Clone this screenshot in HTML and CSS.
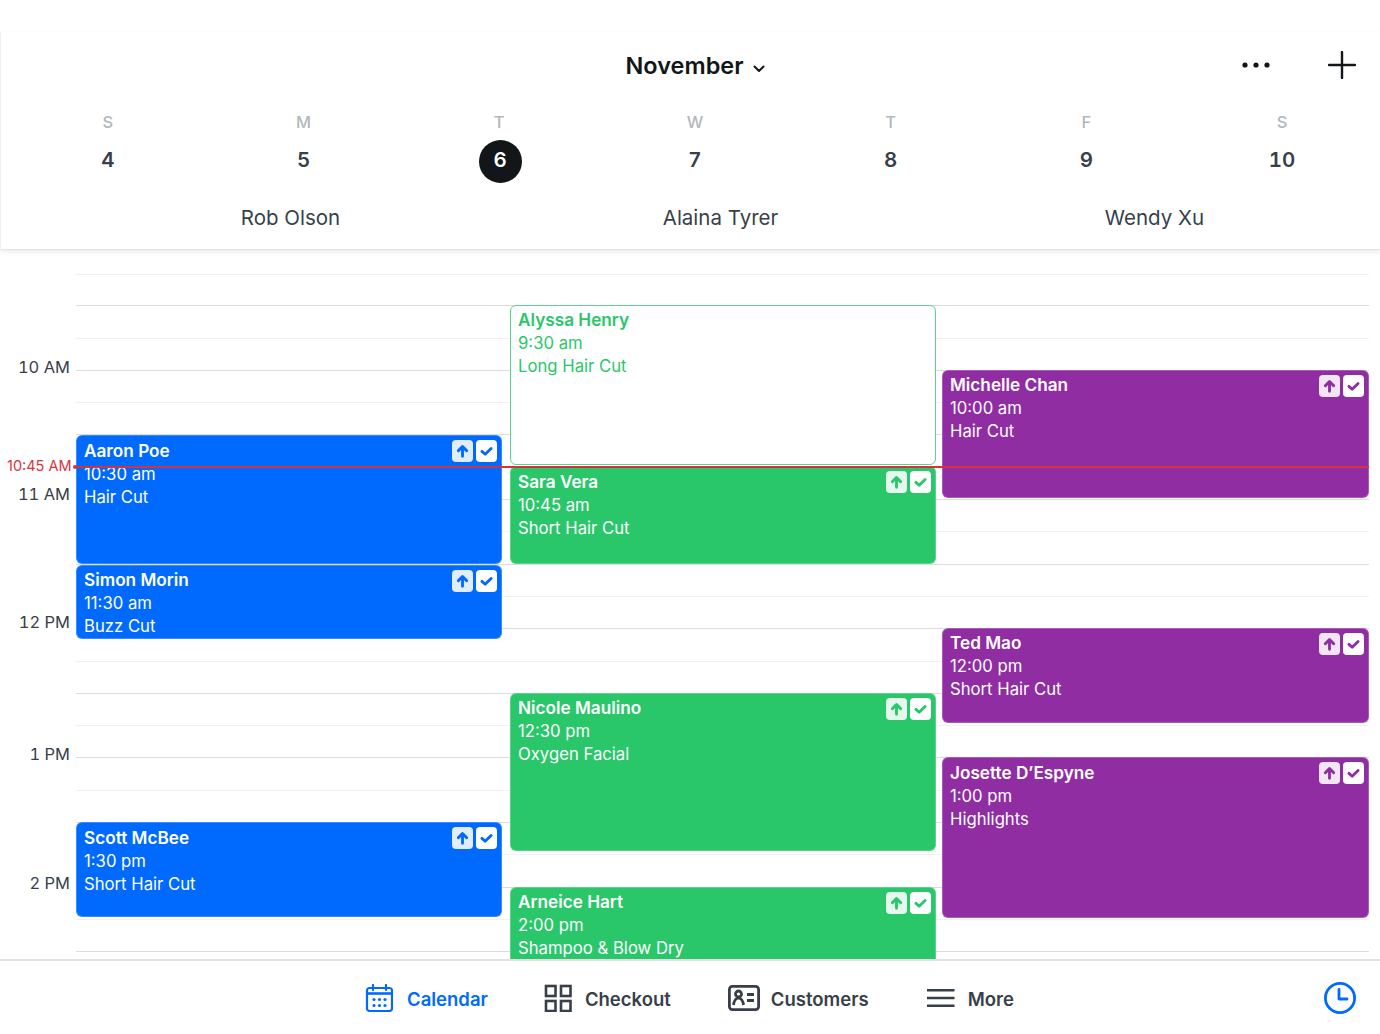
FILE: index.html
```html
<!DOCTYPE html>
<html lang="en">
<head>
<meta charset="utf-8">
<title>Calendar</title>
<link rel="stylesheet" href="styles.css">
</head>
<body>
<svg class="defs" width="0" height="0" aria-hidden="true">
  <symbol id="up" viewBox="0 0 22 22"><path d="M11 16.5V6.5M6.6 10.8 11 6.2l4.4 4.600" fill="none" stroke="currentColor" stroke-width="3" stroke-linecap="round" stroke-linejoin="round"/></symbol>
  <symbol id="ok" viewBox="0 0 22 22"><path d="M6.2 11.4 9.600 14.400 15.800 8.400" fill="none" stroke="currentColor" stroke-width="3" stroke-linecap="round" stroke-linejoin="round"/></symbol>
</svg>
<div class="app">
  <header class="top">
    <div class="title-row">
      <h1 class="month">November</h1>
      <svg class="chev" width="12" height="8" viewBox="0 0 12 8"><path d="M1.5 1.5 6 6l4.5-4.5" fill="none" stroke="#121618" stroke-width="2" stroke-linecap="round" stroke-linejoin="round"/></svg>
      <div class="top-actions">
        <svg class="dots" width="28" height="6" viewBox="0 0 28 6"><circle cx="3" cy="3" r="2.6"/><circle cx="14" cy="3" r="2.6"/><circle cx="25" cy="3" r="2.6"/></svg>
        <svg class="plus" width="28" height="28" viewBox="0 0 28 28"><path d="M14 1v26M1 14h26" fill="none" stroke="#121618" stroke-width="2.4" stroke-linecap="round"/></svg>
      </div>
    </div>
    <div class="week">
      <div class="day"><span class="dow">S</span><span class="num">4</span></div>
      <div class="day"><span class="dow">M</span><span class="num">5</span></div>
      <div class="day"><span class="dow">T</span><span class="num today">6</span></div>
      <div class="day"><span class="dow">W</span><span class="num">7</span></div>
      <div class="day"><span class="dow">T</span><span class="num">8</span></div>
      <div class="day"><span class="dow">F</span><span class="num">9</span></div>
      <div class="day"><span class="dow">S</span><span class="num">10</span></div>
    </div>
    <div class="staff">
      <div>Rob Olson</div>
      <div>Alaina Tyrer</div>
      <div>Wendy Xu</div>
    </div>
  </header>

  <main class="cal">
    <div class="lines">
      <div class="ln first"></div><div class="ln hv"></div><div class="ln"></div><div class="ln hv"></div>
      <div class="ln"></div><div class="ln hv"></div><div class="ln"></div><div class="ln hv"></div>
      <div class="ln"></div><div class="ln hv"></div><div class="ln"></div><div class="ln hv"></div>
      <div class="ln"></div><div class="ln hv"></div><div class="ln"></div><div class="ln hv"></div>
      <div class="ln"></div><div class="ln hv"></div><div class="ln"></div><div class="ln hv"></div>
      <div class="ln"></div><div class="ln hv"></div>
    </div>

    <div class="hour" style="top:105px">10 AM</div>
    <div class="hour" style="top:232px">11 AM</div>
    <div class="hour" style="top:360px">12 PM</div>
    <div class="hour" style="top:492px">1 PM</div>
    <div class="hour" style="top:621px">2 PM</div>

    <div class="cols">
      <section class="col c1">
        <article class="appt blue nudge" style="top:185px;height:129px">
          <h2>Aaron Poe</h2><p>10:30 am</p><p>Hair Cut</p>
          <div class="btns"><span class="b up"><svg><use href="#up"/></svg></span><span class="b"><svg><use href="#ok"/></svg></span></div>
        </article>
        <article class="appt blue" style="top:315px;height:74px">
          <h2>Simon Morin</h2><p>11:30 am</p><p>Buzz Cut</p>
          <div class="btns"><span class="b up"><svg><use href="#up"/></svg></span><span class="b"><svg><use href="#ok"/></svg></span></div>
        </article>
        <article class="appt blue nudge" style="top:572px;height:95px">
          <h2>Scott McBee</h2><p>1:30 pm</p><p>Short Hair Cut</p>
          <div class="btns"><span class="b up"><svg><use href="#up"/></svg></span><span class="b"><svg><use href="#ok"/></svg></span></div>
        </article>
      </section>
      <section class="col c2">
        <article class="appt outline" style="top:55px;height:160px">
          <h2>Alyssa Henry</h2><p>9:30 am</p><p>Long Hair Cut</p>
        </article>
        <article class="appt green nudge" style="top:216px;height:98px">
          <h2>Sara Vera</h2><p>10:45 am</p><p>Short Hair Cut</p>
          <div class="btns"><span class="b up"><svg><use href="#up"/></svg></span><span class="b"><svg><use href="#ok"/></svg></span></div>
        </article>
        <article class="appt green" style="top:443px;height:158px">
          <h2>Nicole Maulino</h2><p>12:30 pm</p><p>Oxygen Facial</p>
          <div class="btns"><span class="b up"><svg><use href="#up"/></svg></span><span class="b"><svg><use href="#ok"/></svg></span></div>
        </article>
        <article class="appt green" style="top:637px;height:95px">
          <h2>Arneice Hart</h2><p>2:00 pm</p><p>Shampoo &amp; Blow Dry</p>
          <div class="btns"><span class="b up"><svg><use href="#up"/></svg></span><span class="b"><svg><use href="#ok"/></svg></span></div>
        </article>
      </section>
      <section class="col c3">
        <article class="appt purple" style="top:120px;height:128px">
          <h2>Michelle Chan</h2><p>10:00 am</p><p>Hair Cut</p>
          <div class="btns"><span class="b up"><svg><use href="#up"/></svg></span><span class="b"><svg><use href="#ok"/></svg></span></div>
        </article>
        <article class="appt purple" style="top:378px;height:95px">
          <h2>Ted Mao</h2><p>12:00 pm</p><p>Short Hair Cut</p>
          <div class="btns"><span class="b up"><svg><use href="#up"/></svg></span><span class="b"><svg><use href="#ok"/></svg></span></div>
        </article>
        <article class="appt purple nudge" style="top:507px;height:161px">
          <h2>Josette D’Espyne</h2><p>1:00 pm</p><p>Highlights</p>
          <div class="btns"><span class="b up"><svg><use href="#up"/></svg></span><span class="b"><svg><use href="#ok"/></svg></span></div>
        </article>
      </section>
    </div>

    <div class="now"><span class="now-label">10:45 AM</span><span class="now-line"></span></div>
  </main>

  <nav class="tabs">
    <a class="tab active cal-tab">
      <svg width="28" height="28" viewBox="0 0 28 28" fill="none" stroke="#006aff" stroke-width="2.200"><rect x="2" y="4" width="25" height="23" rx="2.500"/><path d="M2 9.500h25" stroke-width="2.600"/><path d="M8 1v5M21 1v5" stroke-linecap="round"/><g fill="#006aff" stroke="none"><circle cx="9" cy="15.500" r="1.600"/><circle cx="14.500" cy="15.500" r="1.600"/><circle cx="20" cy="15.500" r="1.600"/><circle cx="9" cy="21.500" r="1.600"/><circle cx="14.500" cy="21.500" r="1.600"/><circle cx="20" cy="21.500" r="1.600"/></g></svg>
      <span>Calendar</span>
    </a>
    <a class="tab check-tab">
      <svg width="28" height="28" viewBox="0 0 28 28" fill="none" stroke="#373f4a" stroke-width="2.6"><rect x="2" y="2" width="9.5" height="10"/><rect x="17" y="2" width="9.5" height="10"/><rect x="2" y="17" width="9.5" height="10"/><rect x="17" y="17" width="9.5" height="10"/></svg>
      <span>Checkout</span>
    </a>
    <a class="tab cust-tab">
      <svg width="32" height="26" viewBox="0 0 32 26" fill="none" stroke="#373f4a" stroke-width="2.800"><rect x="1.400" y="1.400" width="29.200" height="23.200" rx="3"/><circle cx="10.500" cy="9" r="3"/><path d="M5.500 20c.4-4 2.400-7 5-7s4.600 3 5 7"/><path d="M19 9.500h7M19 15.500h7"/></svg>
      <span>Customers</span>
    </a>
    <a class="tab more-tab">
      <svg width="28" height="20" viewBox="0 0 28 20" fill="none" stroke="#373f4a" stroke-width="2.6"><path d="M0 2.200h27.500M0 10h27.500M0 17.800h27.500"/></svg>
      <span>More</span>
    </a>
    <svg class="clock" width="34" height="34" viewBox="0 0 34 34" fill="none" stroke="#006aff" stroke-width="2.8"><circle cx="17" cy="17" r="14.600"/><path d="M16 8.500v9.500h8" stroke-linecap="round" stroke-linejoin="round"/></svg>
  </nav>
</div>
</body>
</html>
```

FILE: styles.css
```css
* { box-sizing: border-box; }
html, body { margin: 0; padding: 0; background: #fff; }
body { font-family: Inter, "Liberation Sans", sans-serif; color: #373f4a; overflow: hidden; }
.defs { position: absolute; }
.app { width: 1380px; height: 1034px; display: flex; flex-direction: column; overflow: hidden; }

.top { position: relative; z-index: 3; height: 218px; margin-top: 32px; flex: none; background: #fff; border-left: 1px solid #efefef; border-bottom: 1px solid #e4e4e4; box-shadow: 0 2px 5px rgba(0,0,0,.08); }
.title-row { position: relative; height: 50px; display: flex; align-items: center; padding-left: 624.500px; margin-top: 9px; }
.month { margin: 0; font-size: 23.500px; line-height: 28px; font-weight: 600; color: #121618; }
.chev { margin: 5px 0 0 9px; }
.top-actions { position: absolute; right: 24px; top: 10px; display: flex; align-items: center; gap: 58px; }
.dots { fill: #121618; display: block; }
.plus { display: block; }

.week { display: grid; grid-template-columns: repeat(7, 195.71px); margin-left: 9px; margin-top: 20px; height: 76px; }
.day { display: flex; flex-direction: column; align-items: center; }
.dow { font-size: 16.500px; line-height: 20px; font-weight: 500; color: #b2b7bb; margin-top: 1px; }
.num { margin-top: 7px; width: 43px; height: 43px; border-radius: 50%; display: flex; justify-content: center; padding-top: 8px; font-size: 20.500px; line-height: 26px; font-weight: 600; font-feature-settings: "tnum"; color: #373f4a; }
.num.today { background: #121618; color: #fff; margin-top: 8px; padding-top: 7px; position: relative; left: 1px; }

.staff { display: grid; grid-template-columns: 429px 431px 437px; margin: 0 0 0 75px; padding-top: 17px; }
.staff div { text-align: center; font-size: 20.500px; line-height: 28px; color: #373f4a; }

.cal { position: relative; flex: 1; min-height: 0; overflow: hidden; }
.lines { position: absolute; left: 76px; width: 1293px; top: 0; padding-top: 23px; }
.ln { height: 32.300px; border-top: 1px solid #f0f0f0; }
.ln.first { margin-top: 1px; height: 31.300px; }
.ln.hv { border-top: 1px solid #dcdcdc; }

.hour { position: absolute; left: 0; width: 70px; text-align: right; font-size: 16.500px; line-height: 24px; font-feature-settings: "tnum"; color: #373f4a; }

.cols { position: absolute; left: 76px; top: 0; bottom: 0; width: 1293px; display: grid; grid-template-columns: 426px 8px 426px 6px 427px; }
.col { position: relative; }
.c1 { grid-column: 1; }
.c2 { grid-column: 3; }
.c3 { grid-column: 5; }
.appt { position: absolute; left: 0; right: 0; padding: 2px 7px 3px; border: 1px solid rgba(255,255,255,.22); border-radius: 6px; color: #fff; overflow: hidden; }
.appt.nudge { padding-top: 3px; }
.appt h2 { margin: 0 0 1px; font-size: 17.200px; line-height: 23px; font-weight: 600; }
.appt p { margin: 0; font-size: 16.700px; line-height: 23px; }
.blue { background-color: #006aff; }
.green { background-color: #29c76a; }
.purple { background-color: #912da3; }
.outline { background-color: #fff; border: 1px solid #5ad48d; color: #29c76a; }
.btns { position: absolute; top: 4px; right: 4px; display: flex; gap: 3px; }
.b { width: 21px; height: 22px; border-radius: 4px; background: #fff; display: block; }
.b svg { width: 21px; height: 22px; display: block; }
.b.up { background: rgba(255,255,255,.88); }
.blue .b { color: #006aff; }
.green .b { color: #29c76a; }
.purple .b { color: #912da3; }

.now { position: absolute; left: 0; right: 11px; top: 207px; height: 18px; display: flex; align-items: center; }
.now-label { width: 72px; flex: none; padding-left: 7px; font-size: 14.500px; line-height: 18px; color: #db3340; white-space: nowrap; }
.now-line { position: relative; flex: 1; height: 2px; background: #d6323e; margin: 1px 0 0 4px; }
.now-line::before { content: ""; position: absolute; left: -3px; top: -1px; width: 4px; height: 4px; border-radius: 50%; background: #d6323e; }

.tabs { position: relative; z-index: 3; height: 75px; flex: none; background: #fff; border-top: 2px solid #e2e2e2; padding: 0 0 0 365px; display: flex; align-items: center; }
.tab { display: flex; align-items: center; font-size: 18.500px; line-height: 24px; font-weight: 600; color: #373f4a; }
.tab span { position: relative; top: 1px; }
.tab svg { display: block; flex: none; }
.active { color: #006aff; }
.cal-tab { gap: 14px; }
.check-tab { gap: 13px; margin-left: 56px; }
.cust-tab { gap: 11px; margin-left: 57px; }
.more-tab { gap: 13px; margin-left: 58px; }
.clock { position: absolute; left: 1323px; top: 20px; }
```
